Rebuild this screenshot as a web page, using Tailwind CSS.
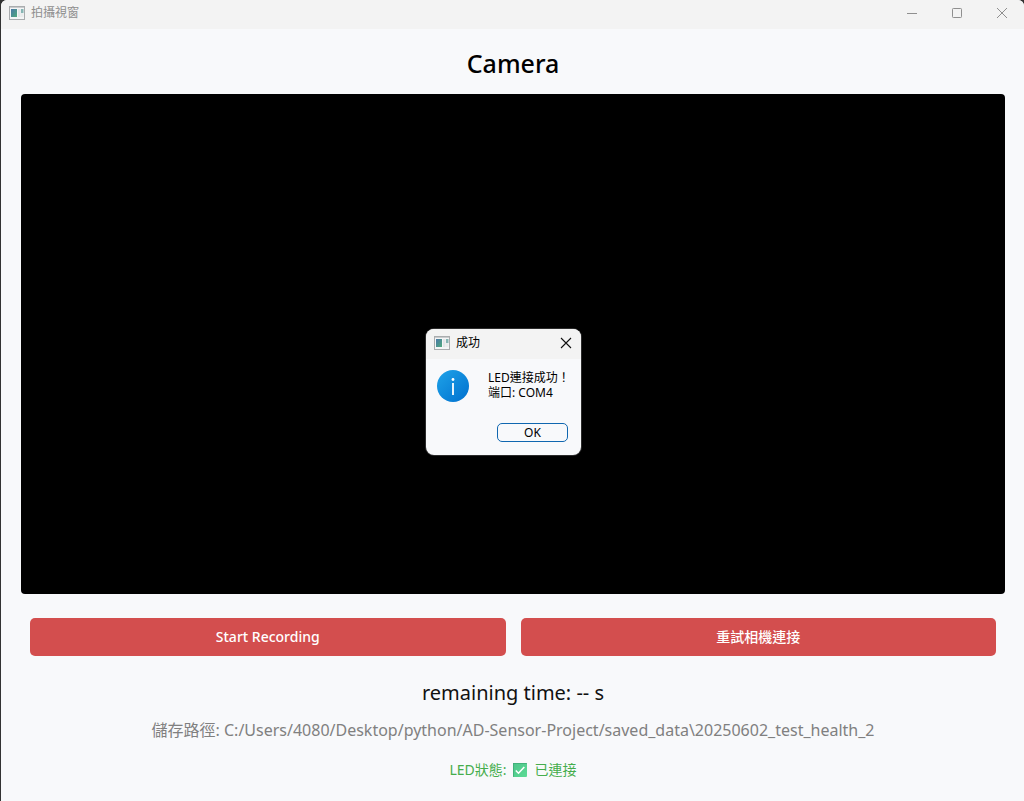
<!DOCTYPE html>
<html lang="zh-Hant">
<head>
<meta charset="utf-8">
<meta name="viewport" content="width=device-width, initial-scale=1">
<title>拍攝視窗</title>
<script src="https://cdn.jsdelivr.net/npm/@tailwindcss/browser@4"></script>
</head>
<body class="bg-[#333333] font-['Noto_Sans','Noto_Sans_CJK_TC',sans-serif] text-black">
<svg class="absolute size-0" aria-hidden="true">
  <defs>
    <linearGradient id="pane" x1="0" y1="0" x2="1" y2="1">
      <stop offset="0" stop-color="#4a78a8"/><stop offset="1" stop-color="#4fa97c"/>
    </linearGradient>
    <linearGradient id="info" x1="0" y1="0" x2="1" y2="1">
      <stop offset="0" stop-color="#1fa3e8"/><stop offset="1" stop-color="#0070cf"/>
    </linearGradient>
    <linearGradient id="tick" x1="0" y1="0" x2="1" y2="1">
      <stop offset="0" stop-color="#4dc48a"/><stop offset="1" stop-color="#5cdb95"/>
    </linearGradient>
    <symbol id="app" viewBox="0 0 16 14">
      <rect x=".5" y=".5" width="15" height="13" fill="#f4f5f6" stroke="#a9acae"/>
      <path d="M1 1.500h14" stroke="#c9cbcd"/>
      <rect x="2" y="3" width="6" height="8" fill="url(#pane)"/>
      <rect x="9" y="3" width="2.500" height="8" fill="#e2e5e7"/>
      <rect x="12" y="3" width="2.500" height="4" fill="#86b5b4"/>
      <rect x="12" y="7" width="2.500" height="4" fill="#e9ecec"/>
    </symbol>
  </defs>
</svg>
<div class="relative ml-px flex min-h-screen flex-col overflow-hidden rounded-t-md bg-[#f8f9fb]">
  <header class="flex h-[29px] items-start justify-between bg-[#f3f3f3] pl-2 text-[#8f8f8f]">
    <div class="flex h-[26px] items-center gap-1.5">
      <svg class="h-3.5 w-4" aria-hidden="true"><use href="#app"/></svg>
      <span class="text-xs leading-4">拍攝視窗</span>
    </div>
    <div class="flex h-[26px]">
      <button aria-label="Minimize" class="flex w-[45px] items-center justify-center"><svg class="size-3" viewBox="0 0 12 12" fill="none" stroke="currentColor"><path d="M1 6.500h10"/></svg></button>
      <button aria-label="Maximize" class="flex w-[45px] items-center justify-center"><svg class="size-3" viewBox="0 0 12 12" fill="none" stroke="currentColor"><rect x="1.500" y="1.500" width="9" height="9" rx=".8"/></svg></button>
      <button aria-label="Close" class="flex w-[45px] items-center justify-center"><svg class="size-3" viewBox="0 0 12 12" fill="none" stroke="currentColor"><path d="M1 1l10 10M11 1L1 11"/></svg></button>
    </div>
  </header>
  <main class="flex flex-1 flex-col px-5 pr-[19px]">
    <h1 class="pt-4 pb-[13px] text-center text-[25px] leading-9 font-medium">Camera</h1>
    <section aria-label="Camera preview" class="relative flex h-[500px] items-center justify-center rounded bg-black">
      <div role="dialog" aria-labelledby="dialog-title" class="absolute top-[235px] right-[424px] w-[155px] overflow-hidden rounded-lg bg-[#f8f9fb] shadow-[0_0_0_1px_#2b2b2b]">
        <div class="flex h-[30px] items-start justify-between bg-[#f3f3f3] px-2 pt-1.5 pr-[9px]">
          <div class="flex items-center gap-1.5">
            <svg class="h-3.5 w-4" aria-hidden="true"><use href="#app"/></svg>
            <h2 id="dialog-title" class="text-xs leading-4">成功</h2>
          </div>
          <button aria-label="Close dialog" class="flex h-4 items-center"><svg class="size-3" viewBox="0 0 12 12" fill="none" stroke="#111" stroke-width="1.100"><path d="M1 1l10 10M11 1L1 11"/></svg></button>
        </div>
        <div class="flex gap-[19px] pt-[11px] pl-[11px]">
          <svg class="size-8" viewBox="0 0 32 32" aria-hidden="true"><circle cx="16" cy="16" r="16" fill="url(#info)"/><circle cx="16" cy="9.500" r="1.400" fill="#fff"/><path d="M16 13v12" stroke="#fff" stroke-width="1.800"/></svg>
          <p class="text-xs leading-[15px] whitespace-nowrap">LED連接成功！<br>端口: COM4</p>
        </div>
        <div class="flex justify-end px-[13px] pt-[21px] pb-[13px]">
          <button class="h-[19px] w-[71px] rounded-[5px] border border-[#1067b0] text-xs leading-4">OK</button>
        </div>
      </div>
    </section>
    <div class="grid grid-cols-2 gap-[15px] px-[9px] pt-6 text-sm font-medium text-white">
      <button class="h-[38px] rounded-[5px] bg-[#d34e4e]">Start Recording</button>
      <button class="h-[38px] rounded-[5px] bg-[#d34e4e]">重試相機連接</button>
    </div>
    <p class="pt-[23px] text-center text-xl leading-7 text-[#111111]">remaining time: -- s</p>
    <p class="pt-[11px] text-center text-base leading-6 text-[#808080]">儲存路徑: C:/Users/4080/Desktop/python/AD-Sensor-Project/saved_data\20250602_test_health_2</p>
    <p class="flex items-center justify-center pt-[18px] text-sm leading-5 text-[#45ad4c]">LED狀態:
      <svg class="mr-2 ml-1.5 size-3.5" viewBox="0 0 14 14" role="img" aria-label="✅"><rect width="14" height="14" rx="1" fill="url(#tick)"/><path d="M0 .5h14M.5 0v14" stroke="#3ba873" stroke-width=".7"/><path d="M2.800 7.500l2.700 2.700L11.300 4" fill="none" stroke="#fff" stroke-width="1.600"/></svg>已連接</p>
  </main>
</div>
</body>
</html>
